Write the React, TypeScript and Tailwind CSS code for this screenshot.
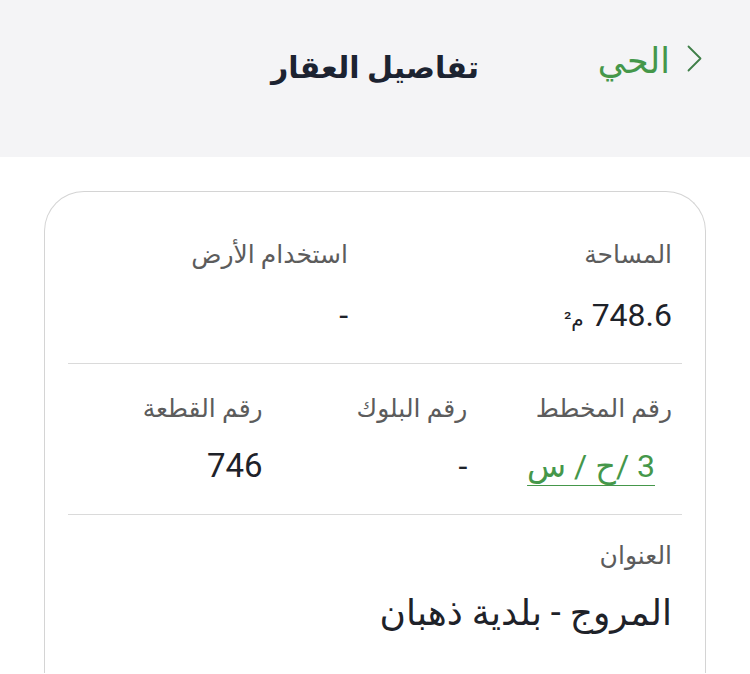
import React from "react";

const font = { fontFamily: '"Roboto", "DejaVu Sans", sans-serif' };

function Field({
  label,
  children,
}: {
  label: string;
  children: React.ReactNode;
}) {
  return (
    <div className="pr-[10px]">
      <div className="text-[25px] leading-[32px] text-[#5c5c5c]">{label}</div>
      {children}
    </div>
  );
}

export default function App() {
  return (
    <div dir="rtl" className="min-h-screen bg-white" style={font}>
      {/* header */}
      <div className="grid h-[157px] grid-cols-3 items-start bg-[#f4f4f6] px-[48px] pt-[42px]">
        <a className="flex items-start gap-[17px] text-[#45974a]">
          <svg className="mt-[3px] h-[27px] w-[15px] shrink-0 text-[#3f7f48]" viewBox="0 0 15 27" fill="none">
            <polyline
              points="1.5,1.5 13.5,13.5 1.5,25.5"
              stroke="currentColor"
              strokeWidth="1.8"
              strokeLinecap="round"
              strokeLinejoin="round"
            />
          </svg>
          <span className="text-[35px] leading-[40px]">الحي</span>
        </a>
        <h1 className="pt-[6px] text-center text-[30px] font-bold leading-[40px] text-[#1c2331]">
          تفاصيل العقار
        </h1>
        <div />
      </div>

      {/* card */}
      <div className="mx-[44px] mt-[34px] rounded-t-[40px] border border-b-0 border-[#d4d4d4] px-[23px] pb-[40px]">
        <div className="grid grid-cols-[324px_1fr] pt-[47px] pb-[24px]">
          <Field label="المساحة">
            <div className="mt-[24px] text-[32px] leading-[40px] text-[#1e2229]">
              748.6 <span className="text-[20px]">م²</span>
            </div>
          </Field>
          <Field label="استخدام الأرض">
            <div className="mt-[24px] text-[32px] leading-[40px] text-[#1e2229]">-</div>
          </Field>
        </div>

        <div className="h-px bg-[#dadada]" />

        <div className="grid grid-cols-3 pt-[29px] pb-[28px]">
          <Field label="رقم المخطط">
            <div className="mt-[21px] text-[32px] leading-[40px]">
              <a className="mr-[17px] text-[#45974a] underline decoration-1 underline-offset-[8px]">
                3 /ح / س
              </a>
            </div>
          </Field>
          <Field label="رقم البلوك">
            <div className="mt-[21px] text-[32px] leading-[40px] text-[#1e2229]">-</div>
          </Field>
          <Field label="رقم القطعة">
            <div className="mt-[21px] text-[33px] leading-[40px] text-[#1e2229]">746</div>
          </Field>
        </div>

        <div className="h-px bg-[#dadada]" />

        <div className="pt-[25px]">
          <Field label="العنوان">
            <div className="mt-[21px] text-[36px] leading-[40px] text-[#1e2229]">
              المروج - بلدية ذهبان
            </div>
          </Field>
        </div>
      </div>
    </div>
  );
}
